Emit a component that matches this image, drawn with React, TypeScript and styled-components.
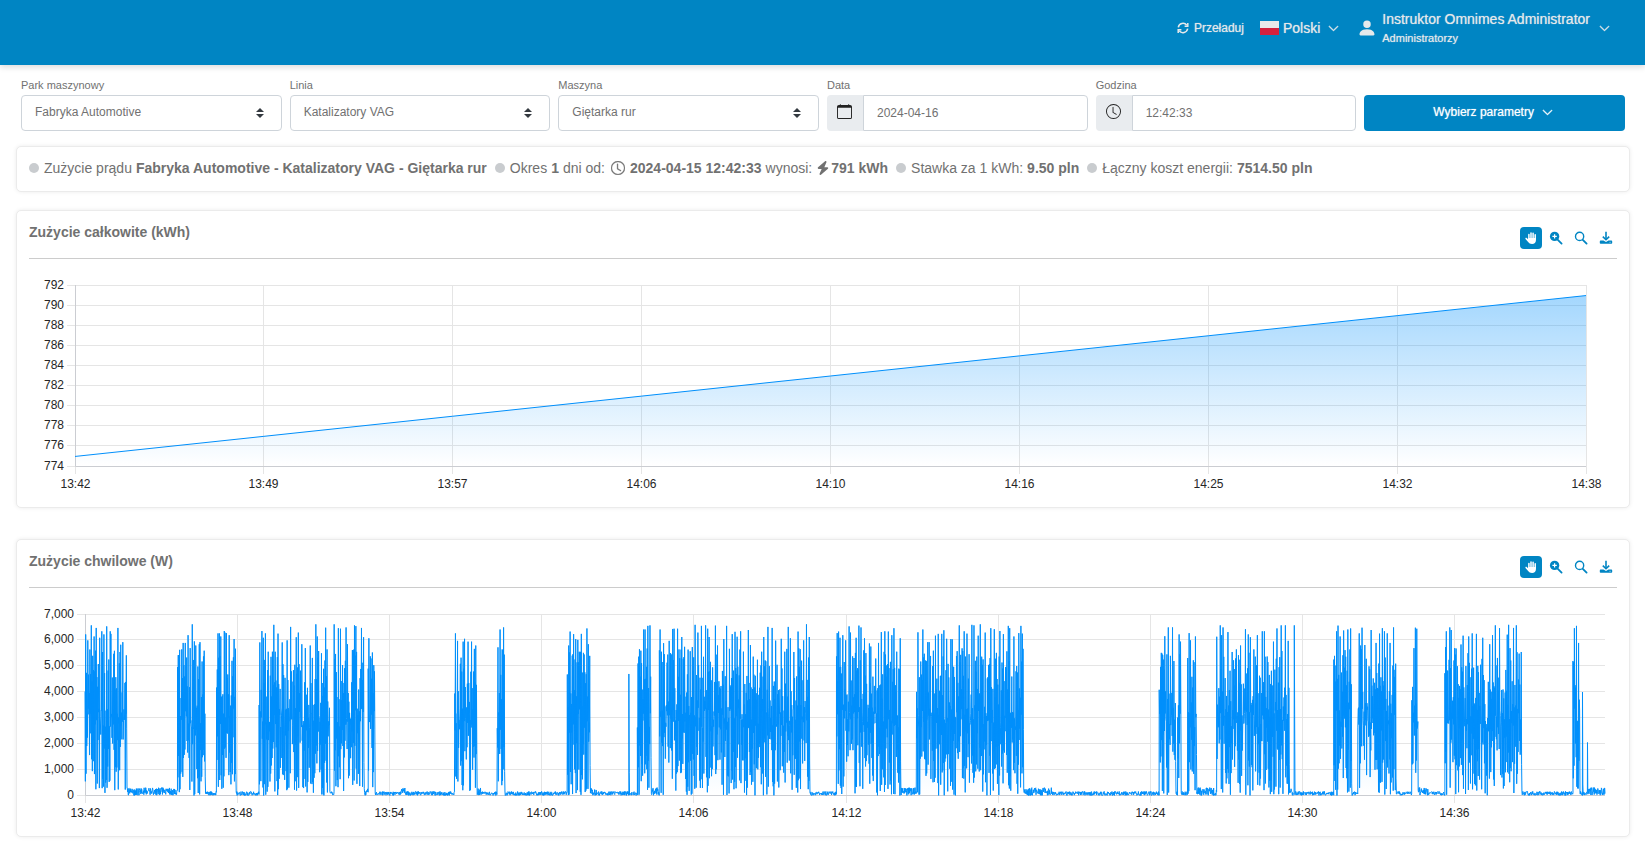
import React, { useLayoutEffect, useRef, useState } from 'react';
import styled, { createGlobalStyle } from 'styled-components';
import { BsCalendar, BsChevronDown, BsClock, BsPersonFill } from 'react-icons/bs';
import { FaBolt } from 'react-icons/fa6';

const BLUE = '#0085c3';
const SERIES = '#008ffb';

const GlobalStyle = createGlobalStyle`
  *, *::before, *::after { box-sizing: border-box; }
  body {
    margin: 0;
    background: #fff;
    color: #717171;
    font-family: "Liberation Sans", Arial, sans-serif;
    font-size: 14px;
  }
  button, input, select { font: inherit; color: inherit; margin: 0; }
  svg { display: block; flex: none; }
`;

const TopBar = styled.header`
  display: flex;
  justify-content: flex-end;
  height: 65px;
  padding: 8px 35px 0 16px;
  background: ${BLUE};
  color: #e6e9eb;
  box-shadow: 0 2px 6px rgba(0, 0, 0, 0.15);
`;

const BarButton = styled.button<{ $size?: number; $gap: number; $after?: number }>`
  display: flex;
  align-items: center;
  gap: ${p => p.$gap}px;
  height: 40px;
  margin-right: ${p => p.$after ?? 0}px;
  padding: 0;
  border: 0;
  background: none;
  font-size: ${p => p.$size ?? 14}px;
  text-align: left;
  text-shadow: 0 0 1px rgba(230, 233, 235, 0.7);
  white-space: nowrap;
  cursor: pointer;
`;

const BarText = styled.span`
  margin-right: 4px;
`;

const UserText = styled(BarText)`
  display: flex;
  flex-direction: column;
  line-height: 18px;
`;

const UserRole = styled.span`
  margin-top: 1px;
  font-size: 11px;
`;

const Filters = styled.form`
  display: grid;
  grid-template-columns: repeat(6, minmax(0, 1fr));
  align-items: end;
  gap: 8px;
  padding: 13px 20px 0 21px;
`;

const Field = styled.div`
  display: flex;
  flex-direction: column;
  min-width: 0;
`;

const Label = styled.label`
  height: 17px;
  font-size: 11px;
  line-height: 14px;
`;

const SelectWrap = styled.div`
  position: relative;
  svg {
    position: absolute;
    top: 13px;
    right: 18px;
    pointer-events: none;
  }
`;

const Select = styled.select`
  appearance: none;
  display: block;
  width: 100%;
  height: 36px;
  padding: 0 30px 3px 13px;
  border: 1px solid #ced4da;
  border-radius: 4px;
  background: #fff;
  font-size: 12px;
`;

const InputGroup = styled.div`
  display: flex;
  height: 36px;
`;

const Addon = styled.span`
  display: flex;
  align-items: center;
  justify-content: center;
  width: 36px;
  padding-bottom: 3px;
  border-radius: 4px 0 0 4px;
  background: #e9ecef;
  color: #222;
`;

const Input = styled.input`
  flex: 1;
  min-width: 0;
  padding: 0 13px;
  border: 1px solid #ced4da;
  border-radius: 0 4px 4px 0;
  background: #fff;
  font-size: 12px;
`;

const PrimaryButton = styled.button`
  display: flex;
  align-items: center;
  justify-content: center;
  gap: 8px;
  height: 36px;
  padding: 0 3px 2px 0;
  border: 0;
  border-radius: 4px;
  background: ${BLUE};
  color: #fff;
  font-size: 12px;
  text-shadow: 0 0 1px rgba(255, 255, 255, 0.7);
  cursor: pointer;
`;

const Main = styled.main`
  display: flex;
  flex-direction: column;
  padding: 15px 15px 18px 16px;
`;

const Card = styled.section<{ $gap?: number }>`
  margin-bottom: ${p => p.$gap ?? 0}px;
  border: 1px solid #ebebeb;
  border-radius: 5px;
  background: #fff;
  box-shadow: 0 0 4px rgba(0, 0, 0, 0.08);
`;

const Summary = styled.div`
  display: flex;
  flex-wrap: wrap;
  align-items: center;
  gap: 0 8px;
  min-height: 44px;
  padding: 0 12px 2px;
  line-height: 20px;
`;

const Fact = styled.span`
  display: flex;
  align-items: center;
  gap: 4px;
  white-space: nowrap;
`;

const Energy = styled.b`
  display: flex;
  align-items: center;
  gap: 1px;
`;

const Clock = styled.span`
  margin: 0 1px 0 2px;
`;

const Dot = styled.i`
  width: 10px;
  height: 10px;
  margin-right: 1px;
  border-radius: 50%;
  background: #c9cccf;
`;

const CardHead = styled.div`
  display: flex;
  justify-content: space-between;
  height: 48px;
  margin: 0 12px;
  border-bottom: 1px solid #ccc;
`;

const Title = styled.h2`
  margin: 12px 0 0;
  font-size: 14px;
  line-height: 18px;
`;

const Tools = styled.div`
  display: flex;
  gap: 3px;
  padding: 16px 0 0;
`;

const Tool = styled.button<{ $active?: boolean }>`
  display: flex;
  align-items: center;
  justify-content: center;
  width: 22px;
  height: 22px;
  padding: 0;
  border: 0;
  border-radius: 4px;
  background: ${p => (p.$active ? BLUE : 'none')};
  color: ${p => (p.$active ? '#fff' : BLUE)};
  cursor: pointer;
`;

const Plot = styled.div`
  height: 248px;
  svg { width: 100%; height: 248px; }
  text {
    fill: #262626;
    font-family: "Liberation Sans", Arial, sans-serif;
    font-size: 12px;
  }
`;

type Point = [number, number];

interface ChartProps {
  id: string;
  label: string;
  left: number;
  right: number;
  yLabels: string[];
  yMin: number;
  yMax: number;
  xLabels: string[];
  xStep: number;
  xMax: number;
  opacity: number;
  points: Point[];
}

const TOP = 26;
const BOTTOM = 207;

function Chart(p: ChartProps) {
  const box = useRef<HTMLDivElement>(null);
  const [width, setWidth] = useState(1612);

  useLayoutEffect(() => {
    const el = box.current;
    if (!el) return;
    const measure = () => setWidth(el.clientWidth);
    measure();
    const watcher = new ResizeObserver(measure);
    watcher.observe(el);
    return () => watcher.disconnect();
  }, []);

  const end = width - p.right;
  const px = (x: number) => p.left + (x / p.xMax) * (end - p.left);
  const py = (y: number) => BOTTOM - ((y - p.yMin) / (p.yMax - p.yMin)) * (BOTTOM - TOP);
  const snap = (v: number) => Math.floor(v) + 0.5;
  const line = p.points.map(([x, y]) => `${px(x).toFixed(2)},${(py(y) + 0.5).toFixed(2)}`).join('L');

  return (
    <Plot ref={box}>
      <svg role="img" aria-label={p.label}>
        <defs>
          <linearGradient id={p.id} x1="0" x2="0" y1={TOP} y2={BOTTOM} gradientUnits="userSpaceOnUse">
            <stop offset="0" stopColor={SERIES} stopOpacity={p.opacity} />
            <stop offset="1" stopColor={SERIES} stopOpacity="0" />
          </linearGradient>
        </defs>
        {p.yLabels.map((text, i) => {
          const y = BOTTOM - (i * (BOTTOM - TOP)) / (p.yLabels.length - 1);
          return (
            <g key={text}>
              <line x1={p.left - 8} x2={end} y1={snap(y)} y2={snap(y)} stroke="#e5e5e5" />
              <text x={p.left - 11} y={snap(y) + 3.5} textAnchor="end">{text}</text>
            </g>
          );
        })}
        {p.xLabels.map((text, i) => {
          const x = px(i * p.xStep);
          return (
            <g key={text}>
              <line x1={snap(x)} x2={snap(x)} y1={TOP} y2={BOTTOM + 8} stroke="#e5e5e5" />
              <text x={snap(x)} y={BOTTOM + 22} textAnchor="middle">{text}</text>
            </g>
          );
        })}
        <path d={`M${snap(p.left)},${TOP}V${snap(BOTTOM)}H${end}`} fill="none" stroke="#cbcdd2" />
        <path d={`M${px(p.points[0][0])},${BOTTOM}L${line}V${BOTTOM}Z`} fill={`url(#${p.id})`} />
        <path d={`M${line}`} fill="none" stroke={SERIES} strokeLinejoin="bevel" />
      </svg>
    </Plot>
  );
}

/* Working periods of the machine: start, end, then the power peaks as time/value pairs. */
const periods: number[][] = [
  [0, 41.5, 1, 6230, 3, 6000, 6, 6580, 9, 6150, 11, 6480, 15, 6100, 17, 6350, 19, 6230, 22, 6540, 25, 6350, 26, 6250, 29, 5480, 33, 6480, 35, 5550, 36, 5830, 38, 5930, 41, 5420],
  [92.5, 120, 94, 5430, 97, 5650, 98, 5900, 100, 5900, 103, 6200, 105, 5700, 107, 6620, 109, 5960, 111, 5800, 114, 5850, 115, 5930, 119, 5600],
  [131.5, 151, 133, 6270, 134, 6270, 136, 6150, 139, 6360, 140, 6300, 141, 6280, 144, 6200, 149, 6050],
  [174, 244, 175, 5920, 176.5, 6360, 178, 6100, 180, 6270, 183, 5560, 187, 5560, 189, 6600, 193, 6260, 197, 5920, 202, 6000, 205.5, 6520, 211, 6120, 213, 6300, 217, 5850, 220, 5700, 225, 5800, 230.5, 6620, 232, 6150, 236, 5500, 240.5, 6490, 242, 5650],
  [249, 279, 249, 6620, 253.5, 6470, 255, 6450, 261, 6500, 262.5, 5850, 268, 5570, 269.5, 6580, 271, 6550, 276.5, 6480, 278.5, 6120],
  [283, 289.5, 284, 6080, 286, 5300, 287.5, 5530, 289, 4800],
  [369.5, 391.5, 370, 6270, 372, 5980, 375.5, 5330, 378, 5950, 379.5, 6060, 382.5, 5950, 386.5, 5950, 389, 5670, 390.5, 5800],
  [412, 419, 412.5, 5730, 414.5, 6420, 417, 5650, 418.5, 6500],
  [482, 505, 483.5, 5800, 485, 6340, 488.5, 6240, 490.5, 6050, 492.5, 6020, 496, 6250, 501.5, 6460, 503, 5850, 504.5, 5400],
  [543.5, 544, 543.5, 4700],
  [552, 565.5, 553.5, 5370, 555.5, 5600, 558, 6420, 560, 6420, 562.5, 6560, 564.5, 6580],
  [574, 724, 575, 6420, 578.5, 5890, 582.5, 5450, 583.5, 5980, 587, 6440, 589, 6450, 592.5, 6450, 596.5, 6130, 599, 5750, 604.5, 5580, 607, 5740, 610, 6600, 612.5, 6300, 616, 6560, 620, 6580, 622, 6450, 624, 6130, 630, 6570, 632, 5800, 638.5, 6050, 641.5, 6560, 647, 6240, 649.5, 6330, 652, 6140, 655, 6350, 663, 6400, 665, 5820, 668, 5370, 676, 5560, 678.5, 6130, 682.5, 6520, 686.5, 6480, 690.5, 5990, 696, 6060, 699, 5560, 702.5, 6520, 705, 6080, 708.5, 5550, 712.5, 6340, 715, 5660, 718, 6000, 721, 6620, 723.5, 6130],
  [751, 815, 751.5, 6280, 753, 6340, 754.5, 6100, 757.5, 6200, 760, 6000, 763.5, 6540, 765, 6300, 770.5, 6100, 773.5, 6570, 775.5, 6500, 779, 6080, 784, 5880, 785.5, 5760, 793, 5900, 796, 6320, 799, 6350, 802.5, 6340, 806, 6200, 808.5, 6470, 814.5, 6080],
  [831, 938, 832.5, 6310, 837.5, 6420, 842.5, 5930, 843.5, 5930, 847.5, 5600, 850, 6180, 852.5, 6250, 856, 6250, 858, 6390, 861, 6060, 865, 6050, 866.5, 6040, 873.5, 6580, 878.5, 6350, 881.5, 6260, 886, 6600, 888.5, 6580, 892.5, 6180, 895, 6620, 899.5, 6300, 905.5, 6470, 908.5, 6430, 914.5, 6360, 918, 6240, 922.5, 6560, 924, 6470, 928, 6150, 933, 6280, 935, 6560, 936.5, 6260],
  [1073.5, 1090, 1074.5, 3700, 1077, 5430, 1079, 6160, 1082.5, 6500, 1085, 5400, 1087, 6500, 1088.5, 5200],
  [1092, 1095.5, 1093.5, 6230, 1095, 5950],
  [1102, 1111, 1103.5, 6280, 1105, 6000, 1107.5, 5230, 1110, 6150],
  [1131, 1203.5, 1131, 6140, 1134.5, 6580, 1136, 6200, 1137.5, 6500, 1142, 6320, 1146.5, 5550, 1150.5, 5650, 1154.5, 5800, 1159.5, 6430, 1162.5, 6230, 1164.5, 6120, 1168, 5650, 1171.5, 6200, 1176.5, 6350, 1178.5, 6350, 1188, 5950, 1191.5, 6460, 1195.5, 6580, 1199.5, 6580, 1202.5, 5980],
  [1208.5, 1209, 1208.5, 6580],
  [1248, 1266, 1248.5, 5400, 1250.5, 6350, 1252.5, 6570, 1254.5, 6150, 1257.5, 6380, 1262, 6420, 1264.5, 6460, 1265.5, 4300],
  [1272, 1310, 1273.5, 6270, 1275, 5800, 1276.5, 6490, 1279, 5820, 1285, 6400, 1290, 5900, 1293.5, 6260, 1296.5, 6470, 1298.5, 6350, 1301.5, 6270, 1304.5, 5900, 1307.5, 6500, 1309, 4860],
  [1326, 1332, 1326.5, 4200, 1328, 5700, 1329.5, 6490, 1331, 6450],
  [1359, 1436, 1359.5, 5740, 1360.5, 6350, 1364, 6500, 1365.5, 6400, 1369, 5700, 1375, 5840, 1377.5, 6180, 1383, 6150, 1386.5, 6270, 1390.5, 6250, 1396.5, 6100, 1403.5, 5850, 1406.5, 6200, 1409.5, 6580, 1413.5, 6470, 1421, 6220, 1423, 6600, 1427.5, 6480, 1430.5, 6580, 1435, 5550],
  [1487, 1493.5, 1487, 5200, 1488.5, 6470, 1490.5, 6560, 1492.5, 5900],
  [1496.5, 1497, 1496.5, 4000],
  [1501.5, 1502, 1501.5, 2050],
];

/* Stretches where the idle machine still draws up to 300 W. */
const restless: Point[] = [
  [41, 93], [279, 283], [316, 320], [391, 396], [505, 512], [565, 574], [815, 831],
  [938, 966], [1111, 1131], [1203, 1208], [1332, 1342], [1502, 1520],
];

function buildPower(): Point[] {
  let seed = 20240416;
  const random = () => {
    seed = (Math.imul(seed, 1664525) + 1013904223) >>> 0;
    return seed / 4294967296;
  };
  const out: Point[] = [];
  let t = 0;
  const idleUntil = (end: number) => {
    for (; t < end; t += 0.3) {
      const top = restless.some(([a, b]) => t >= a && t < b) ? 310 : 160;
      out.push([t, random() * top]);
    }
  };
  periods.forEach(([start, end, ...flat]) => {
    idleUntil(start);
    const peaks: Point[] = [];
    for (let i = 0; i < flat.length; i += 2) peaks.push([flat[i], flat[i + 1]]);
    for (t = start; t <= end; t += 0.7) {
      const peak = peaks.find(([x]) => Math.abs(x - t) < 0.36);
      const high = 2600 + random() * 3100;
      const low = Math.pow(random(), 1.2) * 3400;
      out.push([t, peak ? peak[1] : high]);
      out.push([t + 0.35, low]);
    }
  });
  idleUntil(1519);
  return out;
}

const power = buildPower();
const total: Point[] = Array.from({ length: 9 }, (_, i) => [i, 775 + 2 * i] as Point);
const totalTicks = Array.from({ length: 10 }, (_, i) => String(774 + 2 * i));
const powerTicks = ['0', '1,000', '2,000', '3,000', '4,000', '5,000', '6,000', '7,000'];

function ReloadIcon() {
  return (
    <svg width="12" height="12" viewBox="0 0 12 12" fill="none" stroke="currentColor" strokeWidth="1.5">
      <path d="M1.3 5.3A4.8 4.8 0 0 1 9.8 3.2M10.7 6.7A4.8 4.8 0 0 1 2.2 8.8" />
      <path d="M10.8 1v3.2H7.6M1.2 11V7.8h3.2" />
    </svg>
  );
}

function PolishFlag() {
  return (
    <svg width="19" height="14" viewBox="0 0 19 14">
      <rect width="19" height="7" fill="#e9e9ea" />
      <rect y="7" width="19" height="7" fill="#d4213d" />
    </svg>
  );
}

function HandIcon() {
  return (
    <svg width="14" height="14" viewBox="0 0 14 14">
      <path d="M4.9 3.4v4.4M7 1.9v5.6M9.1 2.2v5.4M11.2 3.8v4.4" stroke="currentColor" strokeWidth="1.5" strokeLinecap="round" />
      <path
        d="M4.15 7h7.8v2.2c0 2.4-1.5 3.8-3.9 3.8-1.9 0-3-.7-3.9-2L1.5 7.9c-.4-.7.5-1.5 1.2-1l1.45 1.3z"
        fill="currentColor"
      />
    </svg>
  );
}

function ZoomInIcon() {
  return (
    <svg width="14" height="14" viewBox="0 0 14 14">
      <circle cx="5.6" cy="5.4" r="4.7" fill="currentColor" />
      <path d="M8.6 8.6l4 4" stroke="currentColor" strokeWidth="1.8" strokeLinecap="round" />
      <path d="M5.6 3.2v4.4M3.4 5.4h4.4" stroke="#fff" strokeWidth="1.2" />
    </svg>
  );
}

function SearchIcon() {
  return (
    <svg width="14" height="14" viewBox="0 0 14 14" fill="none" stroke="currentColor">
      <circle cx="5.6" cy="5.4" r="4.1" strokeWidth="1.4" />
      <path d="M8.8 8.8l3.8 3.8" strokeWidth="1.8" strokeLinecap="round" />
    </svg>
  );
}

function DownloadIcon() {
  return (
    <svg width="14" height="14" viewBox="0 0 14 14" fill="none" stroke="currentColor">
      <path d="M7 .8v7.4" strokeWidth="1.6" />
      <path d="M3.8 5.6L7 8.7l3.2-3.1" strokeWidth="1.6" />
      <path d="M1.6 9.6h2.9L7 11l2.5-1.4h2.9q.8 0 .8.8v1.6q0 .8-.8.8H1.6q-.8 0-.8-.8v-1.6q0-.8.8-.8z" fill="currentColor" stroke="none" />
      <path d="M10.6 11.3h.9" stroke="#fff" strokeWidth=".8" />
    </svg>
  );
}

function SelectField({ id, label, value }: { id: string; label: string; value: string }) {
  return (
    <Field>
      <Label htmlFor={id}>{label}</Label>
      <SelectWrap>
        <Select id={id} defaultValue={value}>
          <option>{value}</option>
        </Select>
        <svg width="8" height="10" viewBox="0 0 4 5"><path fill="#343a40" d="M2 0L0 2h4zm0 5L0 3h4z" /></svg>
      </SelectWrap>
    </Field>
  );
}

interface InputFieldProps { id: string; label: string; value: string; icon: React.ReactNode }

function InputField({ id, label, value, icon }: InputFieldProps) {
  return (
    <Field>
      <Label htmlFor={id}>{label}</Label>
      <InputGroup>
        <Addon>{icon}</Addon>
        <Input id={id} defaultValue={value} />
      </InputGroup>
    </Field>
  );
}

function ChartHead({ title }: { title: string }) {
  return (
    <CardHead>
      <Title>{title}</Title>
      <Tools>
        <Tool type="button" aria-label="Przesuwanie" $active><HandIcon /></Tool>
        <Tool type="button" aria-label="Powiększ"><ZoomInIcon /></Tool>
        <Tool type="button" aria-label="Resetuj widok"><SearchIcon /></Tool>
        <Tool type="button" aria-label="Pobierz"><DownloadIcon /></Tool>
      </Tools>
    </CardHead>
  );
}

export default function App() {
  return (
    <>
      <GlobalStyle />
      <TopBar>
        <BarButton type="button" $size={12} $gap={5} $after={16}>
          <ReloadIcon />
          Przeładuj
        </BarButton>
        <BarButton type="button" $gap={4} $after={18}>
          <PolishFlag />
          <BarText>Polski</BarText>
          <BsChevronDown size={11} strokeWidth={1} />
        </BarButton>
        <BarButton type="button" $gap={5}>
          <BsPersonFill size={20} />
          <UserText>
            Instruktor Omnimes Administrator
            <UserRole>Administratorzy</UserRole>
          </UserText>
          <BsChevronDown size={11} strokeWidth={1} />
        </BarButton>
      </TopBar>
      <Filters>
        <SelectField id="park" label="Park maszynowy" value="Fabryka Automotive" />
        <SelectField id="line" label="Linia" value="Katalizatory VAG" />
        <SelectField id="machine" label="Maszyna" value="Giętarka rur" />
        <InputField id="date" label="Data" value="2024-04-16" icon={<BsCalendar size={15} />} />
        <InputField id="time" label="Godzina" value="12:42:33" icon={<BsClock size={15} />} />
        <PrimaryButton type="button">
          Wybierz parametry
          <BsChevronDown size={11} strokeWidth={1} />
        </PrimaryButton>
      </Filters>
      <Main>
        <Card $gap={18}>
          <Summary>
            <Fact><Dot />Zużycie prądu <b>Fabryka Automotive - Katalizatory VAG - Giętarka rur</b></Fact>
            <Fact>
              <Dot />Okres <b>1</b> dni od:
              <Clock><BsClock size={14} strokeWidth={0.4} /></Clock>
              <b>2024-04-15 12:42:33</b> wynosi:
              <Energy><FaBolt size={14} />791 kWh</Energy>
            </Fact>
            <Fact><Dot />Stawka za 1 kWh: <b>9.50 pln</b></Fact>
            <Fact><Dot />Łączny koszt energii: <b>7514.50 pln</b></Fact>
          </Summary>
        </Card>
        <Card $gap={31}>
          <ChartHead title="Zużycie całkowite (kWh)" />
          <Chart
            id="total" label="Zużycie całkowite (kWh)" left={58} right={43} opacity={0.38}
            yLabels={totalTicks} yMin={774} yMax={792}
            xLabels={['13:42', '13:49', '13:57', '14:06', '14:10', '14:16', '14:25', '14:32', '14:38']}
            xStep={1} xMax={8} points={total}
          />
        </Card>
        <Card>
          <ChartHead title="Zużycie chwilowe (W)" />
          <Chart
            id="power" label="Zużycie chwilowe (W)" left={68} right={24} opacity={0.3}
            yLabels={powerTicks} yMin={0} yMax={7000}
            xLabels={['13:42', '13:48', '13:54', '14:00', '14:06', '14:12', '14:18', '14:24', '14:30', '14:36']}
            xStep={152.1} xMax={1519} points={power}
          />
        </Card>
      </Main>
    </>
  );
}
